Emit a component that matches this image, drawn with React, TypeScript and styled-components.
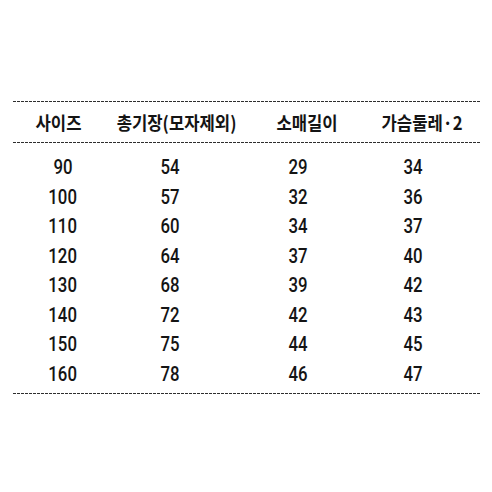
import styled, { createGlobalStyle } from "styled-components";

const GlobalStyle = createGlobalStyle`
    html, body {
        margin: 0;
        padding: 0;
        background: #ffffff;
    }
`;

const Page = styled.div`
    width: 492px;
    height: 492px;
    padding: 101px 12px 0 13px;
    box-sizing: border-box;
    color: #141414;
`;

const Rule = styled.div`
    height: 1px;
    background: repeating-linear-gradient(to right, #2e2e2e 0 3px, transparent 3px 4px);
`;

const HeaderRow = styled.div`
    display: grid;
    grid-template-columns: 92px 144px 116px 114px;
    height: 40px;
    align-items: center;
`;

const HeadCell = styled.div`
    text-align: center;
    font-family: "Noto Sans CJK KR", "Noto Sans", sans-serif;
    font-size: 18.5px;
    font-weight: 700;
    white-space: nowrap;

    span {
        display: inline-block;
        transform: scaleX(0.9);
    }
`;

const Body = styled.div`
    padding: 10px 0 4px;
`;

const Row = styled.div`
    display: grid;
    grid-template-columns: 100px 114px 142px 88px;
    height: 29.5px;
    align-items: center;
`;

const Num = styled.div`
    text-align: center;
    font-family: Roboto, "Liberation Sans", sans-serif;
    font-size: 19.5px;
    font-weight: 500;

    span {
        display: inline-block;
        transform: scaleX(0.86);
    }
`;

const headers = ["사이즈", "총기장(모자제외)", "소매길이", "가슴둘레·2"];

const rows = [
    [90, 54, 29, 34],
    [100, 57, 32, 36],
    [110, 60, 34, 37],
    [120, 64, 37, 40],
    [130, 68, 39, 42],
    [140, 72, 42, 43],
    [150, 75, 44, 45],
    [160, 78, 46, 47],
];

export default function App() {
    return (
        <>
            <GlobalStyle />
            <Page>
                <Rule />
                <HeaderRow>
                    {headers.map((h) => (
                        <HeadCell key={h}>
                            <span>{h}</span>
                        </HeadCell>
                    ))}
                </HeaderRow>
                <Rule />
                <Body>
                    {rows.map((r) => (
                        <Row key={r[0]}>
                            {r.map((v, i) => (
                                <Num key={i}>
                                    <span>{v}</span>
                                </Num>
                            ))}
                        </Row>
                    ))}
                </Body>
                <Rule />
            </Page>
        </>
    );
}
